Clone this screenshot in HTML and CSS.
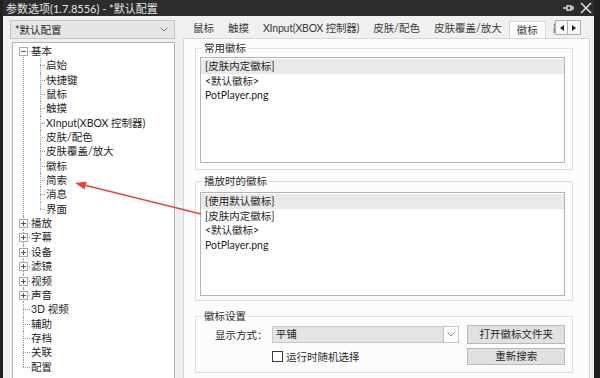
FILE: index.html
```html
<!DOCTYPE html>
<html>
<head>
  <title>参数选项</title>
  <link rel="stylesheet" href="styles.css">
</head>
<body>

<div class="window">
  <div class="titlebar">
    <span class="title">参数选项(1.7.8556) - *默认配置</span>
    <div class="caption-btns">
      <svg width="12" height="10" viewBox="0 0 12 10"><path d="M1 5h4M5 2v6M5 3h4v4H5M9 4h2v2H9" fill="none" stroke="#d8d8d8" stroke-width="1.4"/></svg>
      <svg width="12" height="12" viewBox="0 0 12 12"><path d="M1 1L11 11M11 1L1 11" stroke="#e0e0e0" stroke-width="1.5"/></svg>
    </div>
  </div>

  <div class="client">
    <!-- left: preset + tree -->
    <div class="sidebar">
      <div class="combo">
        <span>*默认配置</span>
        <svg class="chev" width="8" height="5" viewBox="0 0 8 5"><path d="M0.5 0.5L4 4L7.5 0.5" fill="none" stroke="#777"/></svg>
      </div>
      <ul class="tree">
        <li><span class="tog"></span>基本
          <ul class="sub">
            <li>启始</li>
            <li>快捷键</li>
            <li>鼠标</li>
            <li>触摸</li>
            <li>XInput(XBOX 控制器)</li>
            <li>皮肤/配色</li>
            <li>皮肤覆盖/放大</li>
            <li>徽标</li>
            <li>简索</li>
            <li>消息</li>
            <li>界面</li>
          </ul>
        </li>
        <li><span class="tog plus"></span>播放</li>
        <li><span class="tog plus"></span>字幕</li>
        <li><span class="tog plus"></span>设备</li>
        <li><span class="tog plus"></span>滤镜</li>
        <li><span class="tog plus"></span>视频</li>
        <li><span class="tog plus"></span>声音</li>
        <li>3D 视频</li>
        <li>辅助</li>
        <li>存档</li>
        <li>关联</li>
        <li>配置</li>
      </ul>
    </div>

    <!-- right: tabs + page -->
    <div class="main">
      <div class="tabbar">
        <div class="tabstrip">
          <span class="tab">鼠标</span>
          <span class="tab">触摸</span>
          <span class="tab latin">XInput(XBOX 控制器)</span>
          <span class="tab">皮肤/配色</span>
          <span class="tab">皮肤覆盖/放大</span>
          <span class="tab active">徽标</span>
          <span class="tab">简索</span>
        </div>
        <div class="tabscroll">
          <span class="sbtn"><svg width="4" height="6" viewBox="0 0 4 6"><path d="M4 0V6L0 3Z" fill="#222"/></svg></span>
          <span class="sbtn"><svg width="4" height="6" viewBox="0 0 4 6"><path d="M0 0V6L4 3Z" fill="#222"/></svg></span>
        </div>
      </div>

      <div class="page">
        <fieldset class="group g1">
          <legend>常用徽标</legend>
          <div class="listbox lb1">
            <div class="item sel">[皮肤内定徽标]</div>
            <div class="item">&lt;默认徽标&gt;</div>
            <div class="item">PotPlayer.png</div>
          </div>
        </fieldset>

        <fieldset class="group g2">
          <legend>播放时的徽标</legend>
          <div class="listbox lb2">
            <div class="item sel">{使用默认徽标}</div>
            <div class="item">[皮肤内定徽标]</div>
            <div class="item">&lt;默认徽标&gt;</div>
            <div class="item">PotPlayer.png</div>
          </div>
        </fieldset>

        <fieldset class="group g3">
          <legend>徽标设置</legend>
          <div class="row">
            <span class="lbl">显示方式：</span>
            <div class="dropdown">
              <span class="edit">平铺</span>
              <svg class="chev" width="8" height="5" viewBox="0 0 8 5"><path d="M0.5 0.5L4 4L7.5 0.5" fill="none" stroke="#888"/></svg>
            </div>
            <span class="btn">打开徽标文件夹</span>
          </div>
          <div class="row row2">
            <label class="check"><span class="box"></span>运行时随机选择</label>
            <span class="btn btn2">重新搜索</span>
          </div>
        </fieldset>
      </div>
    </div>
  </div>
</div>

<svg class="arrow" width="600" height="378" viewBox="0 0 600 378">
  <line x1="201" y1="214" x2="84" y2="185" stroke="#e5453d" stroke-width="1.6"/>
  <polygon points="75,183 86.7,181.6 84.7,189.6" fill="#e5453d"/>
</svg>

</body>
</html>
```

FILE: styles.css
```css
* {
  box-sizing: border-box;
}

html, body {
  margin: 0;
  padding: 0;
}

body {
  position: relative;
  width: 600px;
  height: 378px;
  overflow: hidden;
  background: #202020;
  font-family: Lato, "Noto Sans CJK SC", sans-serif;
  font-size: 10.5px;
  color: #1e1e1e;
}

.window {
  margin-left: 3px;
  width: 591px;
  height: 378px;
  display: flex;
  flex-direction: column;
}

/* Title bar */
.titlebar {
  height: 18px;
  background: #2c2c2c;
  color: #e4e4e4;
  display: flex;
  align-items: center;
  padding-left: 3px;
  font-size: 11px;
}

.caption-btns {
  margin-left: auto;
  display: flex;
  align-items: center;
  gap: 6px;
  padding-right: 2px;
}

.client {
  flex: 1;
  display: flex;
  background: #f0f0f0;
}

/* Left column */
.sidebar {
  flex: none;
  width: 180px;
  padding: 4px 0 0 7px;
}

.combo {
  width: 165px;
  height: 19px;
  border: 1px solid #c4c4c4;
  background: #e6e6e6;
  display: flex;
  align-items: center;
  padding: 0 6px 0 4px;
}

.chev {
  margin-left: auto;
}

.tree {
  list-style: none;
  margin: 3px 0 0 2px;
  padding: 1px 0 0 0;
  width: 163px;
  height: 340px;
  background: #fff;
  border: 1px solid #b4b4b4;
  border-bottom: none;
  overflow: hidden;
}

.tree li {
  position: relative;
  line-height: 14.35px;
  white-space: nowrap;
}

.tree > li {
  padding-left: 18px;
}

.tree > li::before {
  content: "";
  position: absolute;
  left: 10px;
  top: 0;
  bottom: 0;
  border-left: 1px dotted #9a9a9a;
}

.tree > li:first-child::before {
  top: 7px;
}

.tree > li:last-child::before {
  bottom: auto;
  height: 7px;
}

.tree > li::after {
  content: "";
  position: absolute;
  left: 10px;
  top: 7px;
  width: 7px;
  border-top: 1px dotted #9a9a9a;
}

.tog {
  position: absolute;
  left: 6px;
  top: 3px;
  width: 9px;
  height: 9px;
  border: 1px solid #a8a8a8;
  background: #fff;
  z-index: 1;
}

.tog::before {
  content: "";
  position: absolute;
  left: 1px;
  top: 3px;
  width: 5px;
  height: 1px;
  background: #555;
}

.tog.plus::after {
  content: "";
  position: absolute;
  left: 3px;
  top: 1px;
  width: 1px;
  height: 5px;
  background: #555;
}

.sub {
  list-style: none;
  margin: 0;
  padding: 0;
}

.sub li {
  padding-left: 15px;
}

.sub li::before {
  content: "";
  position: absolute;
  left: 9px;
  top: 0;
  bottom: 0;
  border-left: 1px dotted #9a9a9a;
}

.sub li:last-child::before {
  bottom: auto;
  height: 7px;
}

.sub li::after {
  content: "";
  position: absolute;
  left: 9px;
  top: 7px;
  width: 5px;
  border-top: 1px dotted #9a9a9a;
}

/* Right column */
.main {
  flex: none;
  width: 411px;
  display: flex;
  flex-direction: column;
}

.tabbar {
  height: 22px;
  display: flex;
  align-items: flex-end;
}

.tabstrip {
  flex: none;
  display: flex;
  align-items: flex-end;
  width: 372px;
  padding-left: 3px;
  overflow: hidden;
}

.tab {
  flex: none;
  padding: 0 7px;
  height: 18px;
  line-height: 17px;
  color: #3c3c3c;
  white-space: nowrap;
}

.tab.latin {
  letter-spacing: -0.2px;
}

.tab.active {
  background: #fcfcfc;
  border: 1px solid #d6d6d6;
  border-bottom: none;
  padding: 0 7px;
  position: relative;
  top: 1px;
  height: 18px;
}

.tabscroll {
  flex: none;
  display: flex;
  margin-bottom: 3px;
}

.sbtn {
  width: 13px;
  height: 15px;
  border: 1px solid #b0b0b0;
  background: #f6f6f6;
  display: flex;
  align-items: center;
  justify-content: center;
}

.sbtn + .sbtn {
  border-left: none;
}

.page {
  flex: 1;
  margin-right: 4px;
  background: #fcfcfc;
  border: 1px solid #d6d6d6;
  border-bottom: none;
  padding: 0 16px 0 11px;
}

/* Group boxes */
.group {
  border: 1px solid #dedede;
  margin: 0;
  padding: 0 7px 6px 4px;
  min-width: 0;
}

.group legend {
  padding: 0 2px;
  margin-left: 2px;
  line-height: 14px;
  color: #2a2a2a;
}

.g1 {
  margin-top: 2px;
}

.g2 {
  margin-top: 4px;
  padding-bottom: 4px;
}

.g3 {
  margin-top: 8px;
  padding-bottom: 7px;
}

.listbox {
  background: #fff;
  border: 1px solid #b4b4b4;
  padding-top: 1px;
}

.lb1 {
  margin-top: 2px;
  height: 106px;
}

.lb2 {
  margin-top: 4px;
  height: 104px;
}

.item {
  line-height: 14.5px;
  padding-left: 4px;
  white-space: nowrap;
}

.item.sel {
  background: #e9e9e9;
}

.row {
  display: flex;
  align-items: center;
  margin-top: 2px;
  padding-left: 15px;
}

.row2 {
  margin-top: 4px;
}

.lbl {
  width: 57px;
  color: #2a2a2a;
}

.dropdown {
  width: 188px;
  height: 17px;
  display: flex;
  align-items: center;
  border: 1px solid #c8c8c8;
  background: #fff;
}

.dropdown .edit {
  flex: 1;
  height: 15px;
  line-height: 14px;
  background: #e4e4e4;
  border-right: 1px solid #c0c0c0;
  padding-left: 3px;
}

.dropdown .chev {
  margin: 0 3px 0 3px;
}

.btn {
  margin-left: 8px;
  width: 98px;
  height: 19px;
  line-height: 17px;
  text-align: center;
  background: #e1e1e1;
  border: 1px solid #b8b8b8;
  color: #2a2a2a;
}

.btn2 {
  height: 17px;
  line-height: 15px;
}

.check {
  width: 188px;
  margin-left: 57px;
  display: flex;
  align-items: center;
  color: #2a2a2a;
}

.check .box {
  width: 11px;
  height: 11px;
  border: 1px solid #3a3a3a;
  background: #fff;
  margin-right: 3px;
}

.arrow {
  position: absolute;
  left: 0;
  top: 0;
  pointer-events: none;
}
```
